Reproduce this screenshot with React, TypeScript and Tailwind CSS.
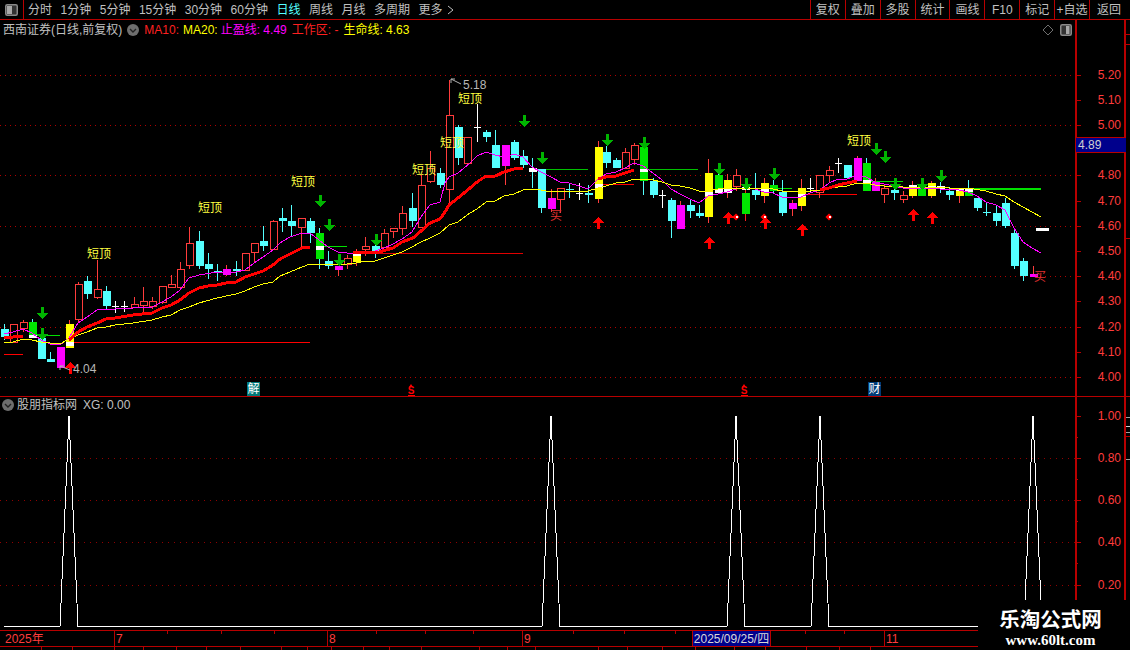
import React from "react";

type Candle = [number, string, number, number, number, number, number?, number?, string?];

const candles: Candle[] = [
  [4, "c", 324, 329, 337, 340],
  [13, "r", 324, 324, 342, 343],
  [23, "r", 320, 322, 328, 332],
  [32, "g", 319, 322, 338, 338, 335, 338],
  [41, "c", 333, 338, 359, 359],
  [50, "c", 352, 359, 362, 362],
  [60, "m", 347, 347, 368, 368],
  [69, "y", 320, 324, 348, 348, 342, 346],
  [78, "r", 282, 284, 319, 323],
  [87, "c", 276, 281, 294, 299],
  [97, "r", 260, 289, 297, 299],
  [106, "c", 286, 291, 306, 309],
  [115, "w", 301, 306, 307, 313],
  [124, "w", 301, 306, 307, 312],
  [134, "r", 297, 304, 307, 308],
  [143, "r", 287, 301, 305, 313],
  [152, "r", 297, 301, 306, 309],
  [162, "r", 286, 286, 302, 304],
  [171, "r", 275, 284, 287, 288],
  [180, "r", 262, 269, 287, 288],
  [189, "r", 227, 243, 265, 269],
  [199, "c", 231, 241, 266, 269],
  [208, "c", 253, 264, 269, 279],
  [217, "c", 264, 271, 273, 281],
  [226, "m", 265, 269, 275, 276],
  [236, "c", 261, 269, 271, 276],
  [245, "r", 253, 253, 270, 271],
  [254, "r", 243, 243, 252, 263],
  [263, "c", 226, 241, 246, 251],
  [273, "r", 220, 221, 249, 250],
  [282, "c", 208, 218, 221, 232],
  [291, "c", 205, 221, 226, 237],
  [301, "r", 218, 218, 227, 247],
  [310, "c", 218, 221, 233, 243],
  [319, "g", 228, 233, 259, 269, 246, 250],
  [328, "c", 251, 261, 266, 269],
  [338, "m", 266, 266, 270, 276],
  [347, "r", 255, 258, 264, 269],
  [356, "y", 249, 252, 262, 266, 252, 256],
  [365, "r", 237, 246, 249, 256],
  [375, "c", 240, 246, 252, 258],
  [384, "r", 229, 233, 247, 247],
  [393, "r", 228, 228, 231, 238],
  [402, "r", 206, 213, 228, 235],
  [412, "c", 193, 208, 221, 227],
  [421, "r", 175, 185, 227, 228],
  [430, "r", 151, 168, 181, 183],
  [440, "c", 168, 173, 185, 188],
  [449, "r", 80, 115, 189, 203],
  [458, "c", 125, 127, 158, 165],
  [467, "r", 137, 137, 163, 165],
  [477, "w", 104, 127, 128, 142],
  [486, "c", 130, 132, 137, 142],
  [495, "c", 130, 145, 168, 168],
  [505, "m", 145, 145, 166, 185],
  [514, "c", 140, 142, 158, 160],
  [523, "c", 150, 156, 165, 168],
  [532, "c", 158, 168, 172, 188, 168, 172],
  [541, "c", 169, 169, 208, 213],
  [551, "m", 189, 198, 209, 212],
  [560, "r", 188, 188, 199, 213],
  [569, "c", 183, 189, 190, 198],
  [579, "w", 183, 193, 194, 200],
  [588, "c", 185, 193, 195, 203],
  [598, "y", 141, 147, 199, 203, 184, 188],
  [606, "c", 146, 152, 163, 168],
  [616, "c", 158, 160, 168, 168],
  [625, "r", 148, 152, 168, 168],
  [634, "r", 143, 145, 159, 165],
  [643, "g", 144, 147, 181, 195, 169, 172],
  [653, "c", 178, 181, 195, 198],
  [662, "w", 190, 195, 196, 208],
  [671, "c", 198, 200, 221, 238],
  [680, "m", 201, 205, 229, 229],
  [690, "c", 200, 205, 211, 218],
  [699, "c", 205, 213, 216, 218],
  [708, "y", 159, 173, 217, 223, 192, 196],
  [718, "g", 170, 175, 193, 193, 189, 193],
  [727, "y", 174, 180, 193, 198, 189, 193],
  [736, "r", 169, 175, 186, 191],
  [745, "g", 178, 193, 214, 221, 187, 190, "#ff2020"],
  [755, "c", 173, 190, 195, 200],
  [764, "y", 178, 183, 196, 203, 189, 192],
  [773, "g", 180, 185, 191, 193],
  [782, "c", 180, 192, 213, 216],
  [792, "m", 200, 203, 209, 216],
  [801, "y", 179, 188, 206, 211, 194, 197],
  [810, "w", 178, 188, 189, 193],
  [819, "r", 175, 175, 192, 198],
  [829, "r", 166, 170, 175, 183],
  [838, "w", 158, 163, 164, 173],
  [847, "c", 165, 165, 178, 178],
  [857, "m", 156, 158, 181, 181],
  [866, "g", 158, 163, 191, 191, 180, 183],
  [875, "m", 178, 182, 191, 191],
  [884, "r", 185, 188, 194, 203],
  [894, "c", 178, 190, 193, 200],
  [903, "r", 191, 195, 199, 203],
  [912, "y", 181, 185, 196, 198, 185, 188],
  [921, "g", 181, 186, 196, 196, 187, 189],
  [931, "y", 181, 183, 196, 198, 186, 189],
  [940, "g", 182, 186, 189, 193, 186, 189],
  [949, "c", 187, 191, 195, 200],
  [959, "y", 188, 188, 196, 203, 188, 191],
  [968, "g", 180, 188, 196, 196, 188, 192],
  [977, "c", 198, 198, 208, 211],
  [986, "c", 203, 212, 213, 216],
  [996, "c", 206, 213, 221, 226],
  [1005, "c", 198, 203, 226, 228],
  [1014, "c", 228, 233, 266, 269],
  [1023, "c", 258, 261, 276, 281],
  [1033, "m", 266, 274, 277, 277],
];

const magenta =
  "4,334 13,332 23,329 32,333 41,340 50,344 60,345 69,338 78,323 87,317 97,310 115,309 133,308 152,307 162,302 171,297 180,290 189,278 199,275 217,272 236,272 245,270 254,263 263,257 273,250 280,243 290,237 302,233 310,233 319,240 328,247 338,252 347,253 365,253 375,251 384,248 393,244 402,239 412,232 421,217 430,205 440,202 445,183 449,177 458,173 470,163 477,156 486,152 495,155 504,157 514,154 523,157 532,167 541,172 551,177 560,182 569,183 579,186 588,189 598,179 606,174 616,172 625,168 634,163 643,166 653,173 662,180 671,189 680,194 690,199 699,203 708,196 718,194 727,192 736,189 745,188 755,189 764,192 773,193 782,197 792,198 801,197 810,193 820,190 829,183 838,179 847,179 857,175 866,177 875,182 884,184 894,186 903,188 931,188 940,189 949,189 959,190 968,192 977,196 986,202 996,205 1005,210 1014,228 1023,242 1032,248 1041,253";
const yellow =
  "4,343 13,342 23,339 32,340 41,342 50,343 60,344 69,339 78,335 87,332 97,328 106,327 115,325 133,323 152,320 162,317 171,315 180,310 189,307 199,303 217,298 236,294 245,291 254,287 263,284 273,282 280,276 290,272 302,267 310,264 347,264 356,263 365,261 375,261 384,258 393,255 402,252 412,247 421,242 430,238 440,233 449,225 458,222 470,213 477,209 486,202 495,201 504,196 514,194 523,190 532,189 541,190 551,192 560,191 588,191 598,188 606,186 616,183 625,182 634,179 643,179 653,180 662,182 671,185 680,186 690,188 699,191 708,191 718,189 727,188 764,188 773,189 782,191 810,191 820,190 829,188 838,187 847,186 857,183 866,183 875,185 884,186 894,186 903,187 931,187 949,188 968,188 986,191 996,194 1005,196 1014,202 1023,207 1032,212 1041,217";
const redLines = [
  "4,338 13,337 23,336",
  "69,340 78,332 87,327 97,323 106,319 115,318 133,315 152,313 162,308 171,305 180,300 189,293 199,288 208,286 217,285 226,283 236,282 245,277 254,274 263,271 273,265 280,259 290,254 302,248 310,247",
  "353,252 379,252 393,248 402,242 413,238 421,231 430,223 440,219 445,212 449,205 458,198 470,188 477,182 486,176 495,176 504,172 514,169 523,168",
  "598,179 606,177 616,176 625,173 634,170",
  "820,190 829,188 838,185 847,183 857,181",
];

const hLines: [number, number, number, string, number][] = [
  [32, 60, 335, "#00e000", 1],
  [323, 347, 246, "#00e000", 1],
  [537, 588, 169, "#00c000", 1],
  [640, 698, 169, "#00c000", 1],
  [730, 792, 188, "#00e000", 1],
  [863, 903, 181, "#00e000", 1],
  [973, 1041, 188, "#00e000", 2],
  [69, 310, 342, "#ff0000", 1],
  [4, 23, 354, "#ff0000", 1],
  [347, 523, 253, "#e00000", 1],
  [602, 634, 184, "#ff0000", 1],
  [800, 857, 194, "#ff0000", 1],
  [1036, 1049, 228, "#ffffff", 3],
];

const downArrows: [number, number][] = [
  [42, 307], [42, 328], [320, 195], [329, 219], [339, 254], [376, 234], [524, 115], [542, 152],
  [607, 134], [644, 137], [719, 163], [746, 178], [774, 168], [876, 143], [885, 151], [895, 178],
  [922, 178], [941, 170],
];
const upArrows: [number, number][] = [
  [70, 362], [598, 217], [709, 237], [728, 212], [765, 217], [802, 224], [913, 209], [932, 212],
];
const topLabels: [number, number][] = [
  [99, 254], [210, 208], [303, 182], [424, 170], [452, 143], [470, 99], [859, 141],
];

const FONT = "'Liberation Sans','Noto Sans CJK SC',sans-serif";
const axisRed = "#b80000";
const labelRed = "#ff3c3c";

function CandleMark({ c }: { c: Candle }) {
  const [x, k, wt, bt, bb, wb, ws, we, wc] = c;
  const fills: Record<string, string> = { c: "#54ffff", m: "#ff00ff", y: "#ffff00", g: "#00e600" };
  const wick = wc ?? (k === "c" || k === "g" ? "#54ffff" : k === "w" ? "#ffffff" : "#ff3c3c");
  if (k === "w") {
    return (
      <g shapeRendering="crispEdges">
        <rect x={x} y={wt} width={1} height={wb - wt} fill="#ffffff" />
        <rect x={x - 3} y={bt} width={7} height={1} fill="#ffffff" />
      </g>
    );
  }
  return (
    <g shapeRendering="crispEdges">
      <rect x={x} y={wt} width={1} height={wb - wt} fill={wick} />
      {k === "r" ? (
        <rect x={x - 3} y={bt} width={7} height={Math.max(bb - bt, 2)} fill="#000000" stroke="#ff3c3c" strokeWidth={1} />
      ) : (
        <rect x={x - 3.5} y={bt} width={8} height={bb - bt} fill={fills[k]} />
      )}
      {ws !== undefined && <rect x={x - 3.5} y={ws} width={8} height={(we as number) - ws} fill="#ffffff" />}
    </g>
  );
}

function DownArrow({ x, y }: { x: number; y: number }) {
  return <polygon shapeRendering="crispEdges" points={`${x - 1},${y} ${x + 2},${y} ${x + 2},${y + 6} ${x + 6},${y + 6} ${x + 0.5},${y + 12} ${x - 5},${y + 6} ${x - 1},${y + 6}`} fill="#00b400" />;
}
function UpArrow({ x, y }: { x: number; y: number }) {
  return <polygon shapeRendering="crispEdges" points={`${x + 0.5},${y} ${x + 6},${y + 6} ${x + 2},${y + 6} ${x + 2},${y + 12} ${x - 1},${y + 12} ${x - 1},${y + 6} ${x - 5},${y + 6}`} fill="#ff0000" />;
}
function Chevron() {
  return (
    <svg width={14} height={14} viewBox="0 0 14 14" className="shrink-0">
      <circle cx={7} cy={7} r={6} fill="#6e6e6e" />
      <path d="M4 6 L7 9 L10 6" fill="none" stroke="#222222" strokeWidth={1.4} />
    </svg>
  );
}

function MainChart() {
  const dotted = [5.2, 5.0, 4.8, 4.6, 4.4, 4.2, 4.0].map((p) => Math.round(377 - (p - 4) * 252));
  return (
    <svg width={1075} height={376} viewBox="0 20 1075 376" className="block" style={{ fontFamily: FONT }}>
      {dotted.map((y) => (
        <line key={y} x1={0} x2={1075} y1={y + 0.5} y2={y + 0.5} stroke="#b00000" strokeDasharray="1 4" shapeRendering="crispEdges" />
      ))}
      {hLines.map(([a, b, y, col, w], i) => (
        <rect key={i} x={a} y={y} width={b - a} height={w} fill={col} shapeRendering="crispEdges" />
      ))}
      {candles.map((c, i) => (
        <CandleMark key={i} c={c} />
      ))}
      <polyline points={magenta} fill="none" stroke="#ff00ff" strokeWidth={1} shapeRendering="crispEdges" />
      <polyline points={yellow} fill="none" stroke="#ffff00" strokeWidth={1} shapeRendering="crispEdges" />
      {redLines.map((p, i) => (
        <polyline key={i} points={p} fill="none" stroke="#ff0000" strokeWidth={3} shapeRendering="crispEdges" />
      ))}
      {downArrows.map(([x, y], i) => (
        <DownArrow key={i} x={x} y={y} />
      ))}
      {upArrows.map(([x, y], i) => (
        <UpArrow key={i} x={x} y={y} />
      ))}
      {[[736, 217], [764, 217], [829, 217]].map(([x, y], i) => (
        <g key={i}>
          <rect x={x - 2.5} y={y - 2.5} width={5} height={5} fill="#ff0000" transform={`rotate(45 ${x} ${y})`} />
          <rect x={x} y={y - 1} width={2} height={2} fill="#ffffff" />
        </g>
      ))}
      {topLabels.map(([x, y], i) => (
        <text key={i} x={x} y={y + 4} textAnchor="middle" fontSize={12} fill="#ffff40">
          短顶
        </text>
      ))}
      <text x={556} y={220} textAnchor="middle" fontSize={12} fill="#e03030">买</text>
      <text x={1040} y={281} textAnchor="middle" fontSize={12} fill="#e03030">买</text>
      <path d="M451 79 L455 79 M451 79 L451 83 M451 79 L461 84" stroke="#b0b0b0" fill="none" />
      <text x={463} y={89} fontSize={12} fill="#b8b8b8">5.18</text>
      <path d="M60 366 L64 366 M60 366 L60 370 M60 366 L70 370" stroke="#b0b0b0" fill="none" />
      <text x={73} y={373} fontSize={12} fill="#b8b8b8">4.04</text>
      <rect x={247} y={382} width={13} height={14} fill="#007878" />
      <text x={253.5} y={393} textAnchor="middle" fontSize={12} fill="#ffffff">解</text>
      <rect x={868} y={382} width={13} height={14} fill="#003c78" />
      <text x={874.5} y={393} textAnchor="middle" fontSize={12} fill="#ffffff">财</text>
      {[411, 744].map((x) => (
        <g key={x}>
          <polygon points={`${x},384 ${x + 2},387 ${x - 2},387`} fill="#ff0000" />
          <text x={x} y={394} textAnchor="middle" fontSize={10} fontWeight={700} fill="#ff0000">S</text>
          <rect x={x - 3} y={395} width={7} height={1} fill="#ff0000" />
        </g>
      ))}
    </svg>
  );
}

function PriceAxis() {
  const labels = ["5.20", "5.10", "5.00", "4.90", "4.80", "4.70", "4.60", "4.50", "4.40", "4.30", "4.20", "4.10", "4.00"];
  return (
    <svg width={51} height={376} viewBox="1075 20 51 376" className="block" style={{ fontFamily: FONT }}>
      {labels.map((l) => {
        const y = Math.round(377 - (parseFloat(l) - 4) * 252);
        return (
          <g key={l}>
            <rect x={1075} y={y} width={6} height={1} fill={axisRed} shapeRendering="crispEdges" />
            {l !== "4.90" && (
              <text x={1121} y={y + 4} textAnchor="end" fontSize={12} fill={labelRed}>
                {l}
              </text>
            )}
          </g>
        );
      })}
    </svg>
  );
}

function IndicatorChart() {
  const peaks = [69, 551, 736, 820, 1033];
  let pts = "4,626.5";
  for (const p of peaks) {
    pts += ` ${p - 9},626.5 ${p},416 ${p + 9},626.5`;
  }
  pts += " 1075,626.5";
  return (
    <svg width={1075} height={233} viewBox="0 397 1075 233" className="block">
      {[458, 500, 542, 585].map((y) => (
        <line key={y} x1={0} x2={1075} y1={y + 0.5} y2={y + 0.5} stroke="#900000" strokeDasharray="1 5" shapeRendering="crispEdges" />
      ))}
      <polyline points={pts} fill="none" stroke="#ffffff" strokeWidth={1} shapeRendering="crispEdges" />
    </svg>
  );
}

function IndicatorAxis() {
  const rows: [string, number][] = [["1.00", 416], ["0.80", 458], ["0.60", 500], ["0.40", 542], ["0.20", 585]];
  return (
    <svg width={51} height={233} viewBox="1075 397 51 233" className="block" style={{ fontFamily: FONT }}>
      {rows.map(([l, y]) => (
        <g key={l}>
          <rect x={1075} y={y} width={6} height={1} fill={axisRed} shapeRendering="crispEdges" />
          <rect x={1075} y={y + 21} width={3} height={1} fill={axisRed} shapeRendering="crispEdges" />
          <text x={1121} y={y + 4} textAnchor="end" fontSize={12} fill={labelRed}>
            {l}
          </text>
        </g>
      ))}
    </svg>
  );
}

function TimeAxis() {
  const shortTicks = [167, 221, 274, 376, 425, 473, 573, 624, 675, 805, 844];
  const longTicks = [114, 327, 522, 884];
  return (
    <svg width={978} height={15} viewBox="0 631 978 15" className="block" style={{ fontFamily: FONT }}>
      {shortTicks.map((x) => (
        <rect key={x} x={x} y={631} width={1} height={3} fill={axisRed} shapeRendering="crispEdges" />
      ))}
      {longTicks.map((x) => (
        <rect key={x} x={x} y={631} width={1} height={15} fill={axisRed} shapeRendering="crispEdges" />
      ))}
      <text x={5} y={643} fontSize={12} fill={labelRed}>2025年</text>
      <text x={116} y={643} fontSize={12} fill={labelRed}>7</text>
      <text x={329} y={643} fontSize={12} fill={labelRed}>8</text>
      <text x={524} y={643} fontSize={12} fill={labelRed}>9</text>
      <text x={886} y={643} fontSize={12} fill={labelRed}>11</text>
    </svg>
  );
}

function EdgeMarks({ marks }: { marks: [number, string][] }) {
  return (
    <div className="flex flex-1 flex-col">
      {marks.map(([h, col], i) => (
        <div key={i} className="w-full shrink-0 border-b" style={{ height: h, borderColor: col }} />
      ))}
    </div>
  );
}

const leftTabs = ["分时", "1分钟", "5分钟", "15分钟", "30分钟", "60分钟", "日线", "周线", "月线", "多周期"];
const rightTabs = ["复权", "叠加", "多股", "统计", "画线", "F10", "标记", "+自选"];
const tabSeps = [42, 73, 115, 144, 177, 207, 241, 282, 308, 332, 364, 390, 422, 480, 508, 536, 599, 628, 663, 696, 735, 766, 807, 840, 871];

export default function App() {
  return (
    <div className="relative flex h-[650px] w-[1130px] flex-col overflow-hidden bg-black text-[12px] leading-none text-[#c0c0c0] font-['Liberation_Sans','Noto_Sans_CJK_SC',sans-serif]">
      <div className="flex h-[20px] shrink-0 items-center border-b border-[#b80000]">
        <div className="flex h-full w-[24px] shrink-0 items-center justify-center border-r border-[#b80000]">
          <svg width={13} height={12} viewBox="0 0 13 12">
            <rect x={0.75} y={0.75} width={11.5} height={10.5} rx={1.5} fill="#333333" stroke="#8a8a8a" strokeWidth={1.5} />
            <rect x={2} y={2} width={5} height={8} fill="#a8a8a8" />
          </svg>
        </div>
        <div className="ml-[4px] flex flex-1 items-center gap-[8.5px]">
          {leftTabs.map((t) => (
            <span key={t} className={t === "日线" ? "text-[#54ffff]" : ""}>
              {t}
            </span>
          ))}
          <span className="flex items-center gap-[4px]">
            更多
            <svg width={7} height={10} viewBox="0 0 7 10">
              <path d="M1 1 L6 5 L1 9" fill="none" stroke="#c0c0c0" />
            </svg>
          </span>
        </div>
        <div className="flex h-full items-center">
          {rightTabs.map((t) => (
            <div key={t} className="flex h-full w-[34.9px] items-center justify-center border-l border-[#b80000]">
              {t}
            </div>
          ))}
          <div className="flex h-full w-[41px] items-center border-l border-[#b80000] pl-[7px]">返回</div>
        </div>
      </div>

      <div className="flex h-[376px] shrink-0">
        <div className="relative w-[1075px] shrink-0">
          <MainChart />
          <div className="absolute left-[3px] top-[3px] flex items-center whitespace-nowrap">
            <span>西南证券(日线,前复权)</span>
            <span className="ml-[4px] mr-[4px]"><Chevron /></span>
            <span className="text-[#ff2020]">MA10:</span>
            <span className="ml-[4px] text-[#ffff00]">MA20:</span>
            <span className="ml-[3px] text-[#ff00ff]">止盈线: 4.49</span>
            <span className="ml-[5px] text-[#ff2020]">工作区: -</span>
            <span className="ml-[5px] text-[#ffff00]">生命线: 4.63</span>
          </div>
          <svg width={12} height={12} viewBox="0 0 12 12" className="absolute left-[1042px] top-[4px]">
            <path d="M6 1 L11 6 L6 11 L1 6 Z" fill="none" stroke="#707070" />
          </svg>
          <svg width={12} height={12} viewBox="0 0 12 12" className="absolute left-[1060px] top-[4px]">
            <rect x={0.75} y={0.75} width={10.5} height={10.5} rx={1.5} fill="#333333" stroke="#8a8a8a" strokeWidth={1.5} />
            <rect x={6} y={2} width={3.5} height={8} fill="#a8a8a8" />
          </svg>
        </div>
        <div className="relative w-[51px] shrink-0 border-l-2 border-r-2 border-[#b80000]">
          <div className="-mx-[2px]"><PriceAxis /></div>
          <div className="absolute left-[-1px] top-[117px] flex h-[16px] w-[50px] items-center border-y border-[#b80000] bg-[#00008c] pl-[2px] text-[#d0d0d0]">
            4.89
          </div>
        </div>
        <EdgeMarks marks={[[15, "#b80000"], [10, "#b80000"], [194, "#b80000"]]} />
      </div>

      <div className="h-[1px] shrink-0 bg-[#b80000]" />

      <div className="flex h-[233px] shrink-0">
        <div className="relative w-[1075px] shrink-0">
          <IndicatorChart />
          <div className="absolute left-[1px] top-[1px] flex items-center whitespace-nowrap">
            <Chevron />
            <span className="ml-[2px]">股朋指标网</span>
            <span className="ml-[6px]">XG: 0.00</span>
          </div>
        </div>
        <div className="w-[51px] shrink-0 border-l-2 border-r-2 border-[#b80000]">
          <div className="-mx-[2px]"><IndicatorAxis /></div>
        </div>
        <EdgeMarks marks={[[21, "#a0a0a0"], [9, "#d0d0d0"], [6, "#a0a0a0"], [4, "#b80000"], [23, "#a0a0a0"]]} />
      </div>

      <div className="h-[1px] shrink-0 bg-[#b80000]" />

      <div className="relative h-[15px] shrink-0">
        <TimeAxis />
        <div className="absolute left-[692px] top-0 flex h-[15px] w-[79px] items-center justify-center border-x border-[#b80000] bg-[#00008c] text-[#d8d8d8]">
          2025/09/25/四
        </div>
      </div>

      <div className="h-[1px] shrink-0 bg-[#b80000]" />

      <div className="flex h-[3px] shrink-0">
        {tabSeps.map((x, i) => (
          <div
            key={x}
            className="h-full shrink-0 border-r border-[#b80000]"
            style={{ width: x - (i === 0 ? 0 : tabSeps[i - 1]) }}
          />
        ))}
      </div>

      <div className="absolute bottom-0 right-0 flex h-[50px] w-[152px] flex-col items-center bg-black pr-[7px] pt-[6px] text-white">
        <span className="text-[20.5px] font-bold leading-[24px] font-['Noto_Sans_CJK_SC',sans-serif]">乐淘公式网</span>
        <span className="mt-[2px] text-[15px] font-bold leading-[16px] font-['Liberation_Serif',serif]">www.60lt.com</span>
      </div>
    </div>
  );
}
